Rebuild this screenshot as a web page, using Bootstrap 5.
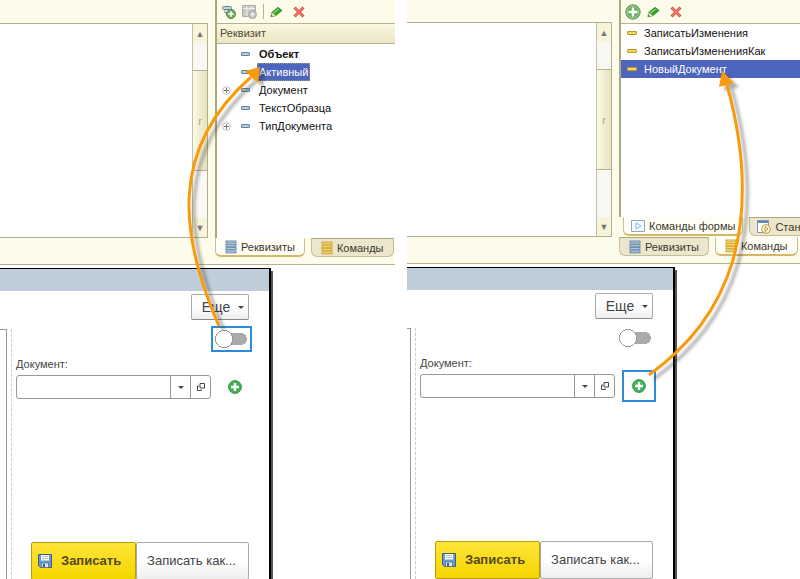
<!DOCTYPE html>
<html lang="ru">
<head>
<meta charset="utf-8">
<meta name="viewport" content="width=device-width, initial-scale=1">
<title>Реквизиты и команды формы</title>
<link href="https://cdn.jsdelivr.net/npm/bootstrap@5.3.0/dist/css/bootstrap.min.css" rel="stylesheet">
<style>
  body { font-family: "Liberation Sans", Arial, sans-serif; font-size: 11px; line-height: 18px; color: #111; background: #fff; }
  button { font: inherit; color: inherit; }
  .page { display: grid; grid-template-columns: 395fr 393fr; column-gap: 12px; height: 100vh; min-height: 560px; overflow: hidden; }
  .pane { --top: 23px; --side: 180px; --tail: 124px; --rail: 7px; --edge: 20px; }
  .pane-b { --top: 22px; --side: 181px; --tail: 125px; --rail: 4px; }
  .designer { background: #fdfbea; border-bottom: 1px solid #b5b294; gap: 7px; margin-bottom: 3px; padding-bottom: 7px; }
  .editor { padding: var(--top) 0 19px; }
  .sheet { background: #fff; border: 1px solid #b0ae8c; border-left: 0; }
  .scroll { width: 15px; border-left: 1px solid #c4c1a2; background: #faf8f2; }
  .scroll button { height: 19px; border: 0; padding: 0; background: #f8f4dc; color: #777; font-size: 9px; line-height: 18px; }
  .thumb { height: 101px; margin-top: 27px; border: solid #b5b294; border-width: 1px 0; background: linear-gradient(90deg, #fbf9ea, #e8e2bc); color: #aaa687; }
  .side { width: var(--side); }
  .box { border-left: 2px solid #aaa87f; background: #fff; }
  .tools { height: 24px; padding: 0 6px 0 5px; gap: 6px; background: #fdfbea; border-bottom: 1px solid #b5b294; }
  .tools button, .plain { border: 0; background: none; padding: 0; display: flex; }
  .divider { width: 1px; height: 15px; background: #b5b294; }
  .heading { height: 20px; padding-left: 3px; background: linear-gradient(#fbf8e2, #ece6c5); border-bottom: 1px solid #b5b294; color: #4f4a30; }
  .tree { min-height: 194px; padding: 1px 0 0 5px; }
  .tree li, .cmds li { height: 18px; }
  .twist { width: 10px; display: flex; }
  .dash { width: 9px; height: 4px; border: 1px solid #64809e; border-radius: 1px; background: #b5cbe0; margin: 0 9px 0 9px; }
  .dash-y { width: 10px; border-color: #bd9720; background: #f4d85b; margin: 0 7px 0 6px; }
  .picked { background: #4d65bd; color: #fff; }
  .tree .picked { padding: 0 2px; margin-left: -2px; outline: 1px dotted #9b9e70; outline-offset: -1px; }
  .cmds { min-height: 193px; }
  .tabs { gap: 6px; }
  .tabs button { height: 19px; gap: 4px; padding: 0 9px; border: 1px solid #c6be94; border-top-color: #aaa87f; border-radius: 0 0 6px 6px; background: #ece6cc; color: #3b382b; display: flex; align-items: center; white-space: nowrap; }
  .tabs button.on { background: #fffef6; border-top-color: #fffef6; border-bottom: 2px solid #d4b865; }
  .inner { background: #fdfbea; padding: 0 0 1px 4px; overflow: hidden; }
  .tabs.inner button { padding: 0 7px; }
  .window { margin-right: var(--tail); border: 1px solid #000; border-width: 1px 2px 0 0; box-shadow: 2px 3px 0 #555; background: #fff; min-height: 0; }
  .caption-bar { height: 22px; background: #bfccd9; }
  .rail { width: var(--rail); margin-top: 38px; border: 1px solid #999; border-width: 1px 1px 0 0; }
  .rail2 { width: 5px; margin-top: 38px; border-right: 1px dashed #ccc; }
  .fields { padding: 3px var(--edge) 0 4px; color: #444; min-width: 0; }
  .soft { border: 1px solid #aaa; border-radius: 2px; background: linear-gradient(#fff 50%, #eee); color: #444; }
  .more { width: 58px; height: 26px; font-size: 14px; padding: 0 0 0 6px; border-bottom-color: #888; }
  .caret { border: solid transparent; border-width: 3px 3px 0; border-top-color: #444; }
  .switch-row { height: 36px; margin-right: -3px; padding-top: 6px; }
  .frame { border: 2px solid #2b8bdc; }
  .frame-off { border: 2px solid transparent; }
  .switch-box { width: 41px; height: 26px; }
  .toggle { appearance: none; width: 33px; height: 18px; margin: 0; background: radial-gradient(circle at 9px 9px, #fff 0 8px, #999 8px 9px, transparent 9px), linear-gradient(#aaa, #aaa) 9px 3px / 17px 12px no-repeat, radial-gradient(circle at 26px 9px, #aaa 0 6px, transparent 6px); }
  .cap { font-size: 11px; line-height: 16px; }
  .entry { height: 24px; border: 1px solid #999; border-radius: 3px; min-width: 0; }
  .entry input { min-width: 0; border: 0; background: none; outline: 0; font-size: 12px; }
  .entry button { width: 20px; flex-shrink: 0; border: 0; border-left: 1px solid #999; background: none; padding: 0; }
  .add-box { width: 34px; height: 32px; margin: -4px -3px -4px 7px; flex-shrink: 0; }
  .open-row { padding-top: 3px; }
  .save-row { margin: 143px 0 0 15px; }
  .save-row button { height: 38px; font-size: 13px; white-space: nowrap; border-radius: 2px; }
  .save-row .soft { padding: 0 2px 0 0; }
  .save-row .save { width: 105px; gap: 9px; padding: 0 0 0 6px; background: linear-gradient(#ffe539, #f4d600); border: 1px solid #b69d00; color: #54491b; font-weight: 700; }
  .arrows { position: absolute; left: 0; top: 0; pointer-events: none; }
</style>
</head>
<body>
<svg width="0" height="0" class="position-absolute" aria-hidden="true">
  <defs>
    <symbol id="plus" viewBox="0 0 16 16"><circle cx="8" cy="8" r="7.3" fill="#45b35a" stroke="#23863a"/><path d="M8 3.5v9M3.500 8h9" stroke="#fff" stroke-width="2.600"/></symbol>
    <symbol id="plus-soft" viewBox="0 0 16 16"><circle cx="8" cy="8" r="7.200" fill="#69ae5d" stroke="#6d9667"/><circle cx="8" cy="8" r="5.800" fill="none" stroke="#9dcc91"/><path d="M8 3.500v9M3.500 8h9" stroke="#fff" stroke-width="2.400"/></symbol>
    <symbol id="pencil" viewBox="0 0 14 12"><path d="M1 11l1-4.500L8.500 1l4.500 3.500L6 10z" fill="#35a52e" stroke="#247b24" stroke-width=".8"/><path d="M4 7l5-4.300" stroke="#8bdb6c" stroke-width="1.500"/><path d="M1 11l1-4.500L6 10z" fill="#f1e8b7"/><path d="M1 11l.5-2 1.500 1.500z" fill="#26431d"/></symbol>
    <symbol id="cross" viewBox="0 0 12 12"><path d="M1.500 1.500l9 9M10.500 1.500l-9 9" stroke="#cc4f43" stroke-width="3"/><path d="M2 2l8 8M10 2l-8 8" stroke="#f08373" stroke-width="1.400"/></symbol>
    <symbol id="rows-blue" viewBox="0 0 12 14"><g fill="#b6d0e6" stroke="#5d83a8" stroke-width=".9"><rect x="1" y="1" width="10" height="2" /><rect x="1" y="4.300" width="10" height="2"/><rect x="1" y="7.600" width="10" height="2"/><rect x="1" y="10.900" width="10" height="2"/></g></symbol>
    <symbol id="rows-gold" viewBox="0 0 12 14"><g fill="#fae078" stroke="#cda02c" stroke-width=".9"><rect x="1" y="1" width="10" height="2"/><rect x="1" y="4.300" width="10" height="2"/><rect x="1" y="7.600" width="10" height="2"/><rect x="1" y="10.900" width="10" height="2"/></g></symbol>
    <symbol id="expand" viewBox="0 0 9 9"><circle cx="4.500" cy="4.500" r="3.800" fill="#fff" stroke="#aaa" stroke-width=".8"/><path d="M4.500 2v5M2 4.500h5" stroke="#777"/></symbol>
    <symbol id="open" viewBox="0 0 10 10"><path d="M4 1.500h4.500v4.500H4zM3 4H1.500v4.500H5.500V7.500" fill="none" stroke="#444"/></symbol>
    <symbol id="disk" viewBox="0 0 14 14"><path d="M.5.5h13v13h-11l-2-2z" fill="#6b9cd0" stroke="#3b5d83"/><path d="M3 1h8v5.500H3z" fill="#fff"/><path d="M4 2.500h6M4 4.500h6" stroke="#a5aeb6" stroke-width=".8"/><path d="M3.500 9h7v4.500h-7z" fill="#dce5ec" stroke="#49678a" stroke-width=".7"/><path d="M5 10h2v3H5z" fill="#405f85"/></symbol>
  </defs>
</svg>

<main class="page position-relative">
  <section class="pane d-flex flex-column overflow-hidden" aria-label="Реквизиты формы">
    <div class="designer d-flex">
      <div class="editor d-flex flex-grow-1">
        <div class="sheet d-flex flex-grow-1 justify-content-end">
          <div class="scroll d-flex flex-column">
            <button type="button" aria-label="Вверх">▲</button>
            <div class="thumb d-flex align-items-center justify-content-center">r</div>
            <button type="button" class="mt-auto" aria-label="Вниз">▼</button>
          </div>
        </div>
      </div>
      <div class="side">
        <div class="box">
          <div class="tools d-flex align-items-center">
            <button type="button" aria-label="Добавить реквизит"><svg width="14" height="14" viewBox="0 0 14 14"><rect x=".5" y="1.500" width="9" height="3" rx="1" fill="#bfd2e4" stroke="#64809e"/><path d="M3 5v3h3" fill="none" stroke="#888"/><circle cx="9" cy="9" r="4.500" fill="#6fb15d" stroke="#538547"/><path d="M9 6.200v5.600M6.200 9h5.600" stroke="#fff" stroke-width="1.600"/></svg></button>
            <button type="button" aria-label="Добавить колонку"><svg width="15" height="14" viewBox="0 0 15 14"><path d="M.5.5h13v11H.5z" fill="#c9c9c5" stroke="#aaa"/><path d="M1 3.500h12M5 1v10M9 1v10" stroke="#eee"/><circle cx="10.500" cy="9.500" r="4" fill="#bbb" stroke="#aaa"/><path d="M10.500 7v5M8 9.500h5" stroke="#eee" stroke-width="1.400"/></svg></button>
            <span class="divider"></span>
            <button type="button" aria-label="Изменить"><svg width="13" height="12"><use href="#pencil"/></svg></button>
            <button type="button" class="ms-1" aria-label="Удалить"><svg width="12" height="12"><use href="#cross"/></svg></button>
          </div>
          <div class="heading">Реквизит</div>
          <ul class="tree list-unstyled m-0">
            <li class="d-flex align-items-center"><span class="twist"></span><span class="dash"></span><b>Объект</b></li>
            <li class="d-flex align-items-center"><span class="twist"></span><span class="dash"></span><span class="picked">Активный</span></li>
            <li class="d-flex align-items-center"><span class="twist"><svg width="9" height="9"><use href="#expand"/></svg></span><span class="dash"></span><span>Документ</span></li>
            <li class="d-flex align-items-center"><span class="twist"></span><span class="dash"></span><span>ТекстОбразца</span></li>
            <li class="d-flex align-items-center"><span class="twist"><svg width="9" height="9"><use href="#expand"/></svg></span><span class="dash"></span><span>ТипДокумента</span></li>
          </ul>
        </div>
        <div class="tabs d-flex">
          <button type="button" class="on"><svg width="12" height="14"><use href="#rows-blue"/></svg>Реквизиты</button>
          <button type="button"><svg width="12" height="14"><use href="#rows-gold"/></svg>Команды</button>
        </div>
      </div>
    </div>
    <div class="window d-flex flex-column flex-grow-1">
      <div class="caption-bar flex-shrink-0"></div>
      <div class="d-flex flex-grow-1">
        <div class="rail flex-shrink-0"></div><div class="rail2 flex-shrink-0"></div>
        <div class="fields flex-grow-1">
          <div class="d-flex justify-content-end"><button type="button" class="soft more d-flex align-items-center justify-content-center gap-2">Еще<span class="caret"></span></button></div>
          <div class="switch-row d-flex justify-content-end align-items-start">
            <label class="switch-box frame d-flex align-items-center justify-content-center"><input type="checkbox" role="switch" class="toggle" aria-label="Активный"></label>
          </div>
          <label for="doc-a" class="cap d-block">Документ:</label>
          <div class="open-row d-flex align-items-center">
            <div class="entry d-flex flex-grow-1"><input id="doc-a" type="text" class="flex-grow-1"><button type="button" class="d-flex align-items-center justify-content-center" aria-label="Выбрать"><span class="caret"></span></button><button type="button" class="d-flex align-items-center justify-content-center" aria-label="Открыть"><svg width="10" height="10"><use href="#open"/></svg></button></div>
            <div class="add-box frame-off d-flex align-items-center justify-content-center"><button type="button" class="plain" aria-label="Новый документ"><svg width="14" height="14"><use href="#plus"/></svg></button></div>
          </div>
          <div class="save-row d-flex">
            <button type="button" class="save d-flex align-items-center"><svg width="14" height="14"><use href="#disk"/></svg>Записать</button>
            <button type="button" class="soft flex-grow-1">Записать как...</button>
          </div>
        </div>
      </div>
    </div>
  </section>

  <section class="pane pane-b d-flex flex-column overflow-hidden" aria-label="Команды формы">
    <div class="designer d-flex">
      <div class="editor d-flex flex-grow-1">
        <div class="sheet d-flex flex-grow-1 justify-content-end">
          <div class="scroll d-flex flex-column">
            <button type="button" aria-label="Вверх">▲</button>
            <div class="thumb d-flex align-items-center justify-content-center">r</div>
            <button type="button" class="mt-auto" aria-label="Вниз">▼</button>
          </div>
        </div>
      </div>
      <div class="side">
        <div class="box">
          <div class="tools d-flex align-items-center ps-1">
            <button type="button" aria-label="Добавить команду"><svg width="16" height="16"><use href="#plus-soft"/></svg></button>
            <button type="button" aria-label="Изменить"><svg width="13" height="12"><use href="#pencil"/></svg></button>
            <button type="button" class="ms-1" aria-label="Удалить"><svg width="12" height="12"><use href="#cross"/></svg></button>
          </div>
          <ul class="cmds list-unstyled m-0">
            <li class="d-flex align-items-center"><span class="dash dash-y"></span>ЗаписатьИзменения</li>
            <li class="d-flex align-items-center"><span class="dash dash-y"></span>ЗаписатьИзмененияКак</li>
            <li class="d-flex align-items-center picked"><span class="dash dash-y"></span>НовыйДокумент</li>
          </ul>
        </div>
        <div class="tabs inner d-flex">
          <button type="button" class="on"><svg width="14" height="12" viewBox="0 0 14 12"><path d="M.5.5h13v11H.5z" fill="#f5faff" stroke="#8ba9cc"/><path d="M5 3l5 3-5 3z" fill="#fff" stroke="#91b2dc"/></svg>Команды формы</button>
          <button type="button"><svg width="14" height="14" viewBox="0 0 14 14"><path d="M.5.5h11v12H.5z" fill="#fff" stroke="#7b95b3"/><path d="M1 2h10" stroke="#5f87b5" stroke-width="2"/><circle cx="9" cy="9" r="4.300" fill="#fff6cf" stroke="#b99a38"/><path d="M8 6.500l3 2.500-3 2.500z" fill="#fff" stroke="#b99a38"/></svg>Стандартные</button>
        </div>
        <div class="tabs d-flex">
          <button type="button"><svg width="12" height="14"><use href="#rows-blue"/></svg>Реквизиты</button>
          <button type="button" class="on"><svg width="12" height="14"><use href="#rows-gold"/></svg>Команды</button>
        </div>
      </div>
    </div>
    <div class="window d-flex flex-column flex-grow-1">
      <div class="caption-bar flex-shrink-0"></div>
      <div class="d-flex flex-grow-1">
        <div class="rail flex-shrink-0"></div><div class="rail2 flex-shrink-0"></div>
        <div class="fields flex-grow-1">
          <div class="d-flex justify-content-end"><button type="button" class="soft more d-flex align-items-center justify-content-center gap-2">Еще<span class="caret"></span></button></div>
          <div class="switch-row d-flex justify-content-end align-items-start">
            <label class="switch-box frame-off d-flex align-items-center justify-content-center"><input type="checkbox" role="switch" class="toggle" aria-label="Активный"></label>
          </div>
          <label for="doc-b" class="cap d-block">Документ:</label>
          <div class="open-row d-flex align-items-center">
            <div class="entry d-flex flex-grow-1"><input id="doc-b" type="text" class="flex-grow-1"><button type="button" class="d-flex align-items-center justify-content-center" aria-label="Выбрать"><span class="caret"></span></button><button type="button" class="d-flex align-items-center justify-content-center" aria-label="Открыть"><svg width="10" height="10"><use href="#open"/></svg></button></div>
            <div class="add-box frame d-flex align-items-center justify-content-center"><button type="button" class="plain" aria-label="Новый документ"><svg width="14" height="14"><use href="#plus"/></svg></button></div>
          </div>
          <div class="save-row d-flex">
            <button type="button" class="save d-flex align-items-center"><svg width="14" height="14"><use href="#disk"/></svg>Записать</button>
            <button type="button" class="soft flex-grow-1">Записать как...</button>
          </div>
        </div>
      </div>
    </div>
  </section>

  <svg class="arrows" width="800" height="579" viewBox="0 0 800 579" aria-hidden="true">
    <defs><filter id="shade" x="-20%" y="-10%" width="150%" height="120%"><feDropShadow dx="5" dy="4" stdDeviation="1.500" flood-color="#333" flood-opacity=".4"/></filter></defs>
    <g filter="url(#shade)" fill="none" stroke="#f99a10" stroke-width="3">
      <path d="M219 326C180 236 168 150 251 77"/>
      <path d="M260 67l-15 4 13 12z" fill="#f99a10" stroke="none"/>
    </g>
    <g filter="url(#shade)" fill="none" stroke="#f99a10" stroke-width="3">
      <path d="M649 375C690 345 718 310 733 260C747 210 745 150 727 85"/>
      <path d="M722 71l-3 16 15-4z" fill="#f99a10" stroke="none"/>
    </g>
  </svg>
</main>
<script src="https://cdn.jsdelivr.net/npm/bootstrap@5.3.0/dist/js/bootstrap.bundle.min.js"></script>
</body>
</html>
